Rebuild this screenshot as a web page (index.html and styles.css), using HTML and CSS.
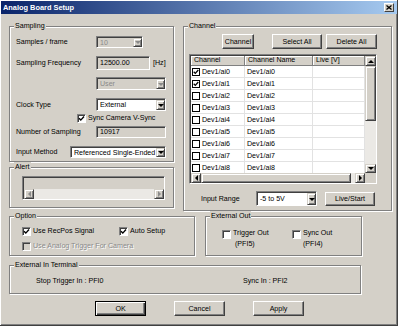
FILE: index.html
```html
<!DOCTYPE html>
<html>
<head>
	<title>Analog Board Setup</title>
	<link rel="stylesheet" href="styles.css">
</head>
<body>
	<div class="window">
		<div class="titlebar">
			<span class="title">Analog Board Setup</span>
			<span class="close"><svg width="6" height="5" viewBox="0 0 6 5"><path d="M0.5 0.5L5.5 4.5M5.5 0.5L0.5 4.5" stroke="#000" stroke-width="1.3"/></svg></span>
		</div>

		<div class="top">
			<div class="left-col">
				<fieldset class="group sampling">
					<legend>Sampling</legend>
					<div class="group-body pad-sampling">
						<div class="row mt4">
							<span class="label">Samples / frame</span>
							<div class="combo disabled w47 h12"><span class="combo-text">10</span><span class="drop"><i class="arrow-down"></i></span></div>
						</div>
						<div class="row mt8">
							<span class="label">Sampling Frequency</span>
							<div class="field readonly w54 h14">12500.00</div>
							<span class="unit">[Hz]</span>
						</div>
						<div class="row mt7">
							<div class="combo disabled w70 h13 indent"><span class="combo-text">User</span><span class="drop"><i class="arrow-down"></i></span></div>
						</div>
						<div class="row mt8">
							<span class="label">Clock Type</span>
							<div class="combo w70 h13"><span class="combo-text">External</span><span class="drop"><i class="arrow-down"></i></span></div>
						</div>
						<div class="row mt2 h10">
							<span class="check sync-check"><svg width="7" height="7" viewBox="0 0 7 7"><path d="M1 3.3L2.8 5.1L6 1.5" fill="none" stroke="#000" stroke-width="1.4"/></svg></span>
							<span class="check-label">Sync Camera V-Sync</span>
						</div>
						<div class="row mt3">
							<span class="label">Number of Sampling</span>
							<div class="field readonly w70 h12">10917</div>
						</div>
						<div class="row mt8">
							<span class="label short">Input Method</span>
							<div class="combo w96 h12"><span class="combo-text">Referenced Single-Ended</span><span class="drop"><i class="arrow-down"></i></span></div>
						</div>
					</div>
				</fieldset>

				<fieldset class="group alert">
					<legend>Alert</legend>
					<div class="group-body pad-alert">
						<div class="alert-box">
							<div class="alert-area"></div>
							<div class="hscroll">
								<span class="sb-btn sb-h"><i class="arrow-left gray"></i></span>
								<span class="track"></span>
								<span class="sb-btn sb-h"><i class="arrow-right gray"></i></span>
							</div>
						</div>
					</div>
				</fieldset>
			</div>

			<fieldset class="group channel">
				<legend>Channel</legend>
				<div class="group-body pad-channel">
					<div class="channel-buttons">
						<button class="btn btn-channel">Channel</button>
						<button class="btn btn-select">Select All</button>
						<button class="btn btn-delete">Delete All</button>
					</div>

					<div class="listview">
						<div class="lv-body">
							<div class="lv-header">
								<span class="col c1">Channel</span>
								<span class="col c2">Channel Name</span>
								<span class="col c3">Live [V]</span>
							</div>
							<div class="lv-row"><span class="cell c1"><span class="lv-check"><svg width="6" height="6" viewBox="0 0 6 6"><path d="M0.7 2.8L2.3 4.4L5.3 1" fill="none" stroke="#000" stroke-width="1.3"/></svg></span>Dev1/ai0</span><span class="cell c2">Dev1/ai0</span><span class="cell c3"></span></div>
							<div class="lv-row"><span class="cell c1"><span class="lv-check"><svg width="6" height="6" viewBox="0 0 6 6"><path d="M0.7 2.8L2.3 4.4L5.3 1" fill="none" stroke="#000" stroke-width="1.3"/></svg></span>Dev1/ai1</span><span class="cell c2">Dev1/ai1</span><span class="cell c3"></span></div>
							<div class="lv-row"><span class="cell c1"><span class="lv-check"></span>Dev1/ai2</span><span class="cell c2">Dev1/ai2</span><span class="cell c3"></span></div>
							<div class="lv-row"><span class="cell c1"><span class="lv-check"></span>Dev1/ai3</span><span class="cell c2">Dev1/ai3</span><span class="cell c3"></span></div>
							<div class="lv-row"><span class="cell c1"><span class="lv-check"></span>Dev1/ai4</span><span class="cell c2">Dev1/ai4</span><span class="cell c3"></span></div>
							<div class="lv-row"><span class="cell c1"><span class="lv-check"></span>Dev1/ai5</span><span class="cell c2">Dev1/ai5</span><span class="cell c3"></span></div>
							<div class="lv-row"><span class="cell c1"><span class="lv-check"></span>Dev1/ai6</span><span class="cell c2">Dev1/ai6</span><span class="cell c3"></span></div>
							<div class="lv-row"><span class="cell c1"><span class="lv-check"></span>Dev1/ai7</span><span class="cell c2">Dev1/ai7</span><span class="cell c3"></span></div>
							<div class="lv-row"><span class="cell c1"><span class="lv-check"></span>Dev1/ai8</span><span class="cell c2">Dev1/ai8</span><span class="cell c3"></span></div>
							<div class="lv-row"><span class="cell c1"><span class="lv-check"></span></span><span class="cell c2"></span><span class="cell c3"></span></div>
						</div>
						<div class="vscroll">
							<span class="sb-btn sb-up"><i class="arrow-up"></i></span>
							<span class="thumb v-thumb"></span>
							<span class="track"></span>
							<span class="sb-btn sb-down"><i class="arrow-down"></i></span>
						</div>
						<div class="hscroll">
							<span class="sb-btn sb-h"><i class="arrow-left"></i></span>
							<span class="thumb h-thumb"></span>
							<span class="track"></span>
							<span class="sb-btn sb-h"><i class="arrow-right"></i></span>
						</div>
						<div class="corner"></div>
					</div>

					<div class="input-row">
						<span class="range-label">Input Range</span>
						<div class="combo w61 h15"><span class="combo-text">-5 to 5V</span><span class="drop"><i class="arrow-down"></i></span></div>
						<button class="btn btn-live">Live/Start</button>
					</div>
				</div>
			</fieldset>
		</div>

		<div class="middle">
			<fieldset class="group option">
				<legend>Option</legend>
				<div class="group-body pad-option">
					<div class="row mt4 h10">
						<span class="check-item recpos">
							<span class="check"><svg width="7" height="7" viewBox="0 0 7 7"><path d="M1 3.3L2.8 5.1L6 1.5" fill="none" stroke="#000" stroke-width="1.4"/></svg></span>
							<span class="check-label">Use RecPos Signal</span>
						</span>
						<span class="check-item">
							<span class="check"><svg width="7" height="7" viewBox="0 0 7 7"><path d="M1 3.3L2.8 5.1L6 1.5" fill="none" stroke="#000" stroke-width="1.4"/></svg></span>
							<span class="check-label">Auto Setup</span>
						</span>
					</div>
					<div class="row mt5 h10">
						<span class="check-item">
							<span class="check disabled"></span>
							<span class="check-label disabled-text">Use Analog Trigger For Camera</span>
						</span>
					</div>
				</div>
			</fieldset>

			<fieldset class="group ext-out">
				<legend>External Out</legend>
				<div class="group-body pad-ext">
					<div class="out-row">
						<div class="out-item trigger">
							<span class="check out-check"></span>
							<div class="out-label"><div>Trigger Out</div><div class="pfi">(PFI5)</div></div>
						</div>
						<div class="out-item">
							<span class="check out-check"></span>
							<div class="out-label"><div>Sync Out</div><div>(PFI4)</div></div>
						</div>
					</div>
				</div>
			</fieldset>
		</div>

		<fieldset class="group terminal">
			<legend>External In Terminal</legend>
			<div class="group-body pad-terminal">
				<span class="term-item">Stop Trigger In : PFI0</span>
				<span>Sync In : PFI2</span>
			</div>
		</fieldset>

		<div class="buttons">
			<button class="btn dialog-btn default">OK</button>
			<button class="btn dialog-btn">Cancel</button>
			<button class="btn dialog-btn">Apply</button>
		</div>
	</div>
</body>
</html>
```

FILE: styles.css
```css
body {
	margin: 0;
	font-family: "Liberation Sans", Arial, sans-serif;
	font-size: 7.1px;
	color: #000;
	background: #d4d0c8;
}

.window {
	width: 398px;
	height: 326px;
	box-sizing: border-box;
	padding: 1px;
	background: #d4d0c8;
	box-shadow: inset -1px -1px #404040, inset 1px 1px #fff, inset -2px -2px #808080;
	overflow: hidden;
}

/* title bar */
.titlebar {
	height: 13px;
	display: flex;
	align-items: center;
	justify-content: space-between;
	padding: 0 3px 0 2px;
	background: linear-gradient(to right, #0a246a, #a6caf0);
}

.title {
	color: #fff;
	font-weight: bold;
	font-size: 7.4px;
}

.close {
	width: 10px;
	height: 9px;
	box-sizing: border-box;
	background: #d4d0c8;
	border: 1px solid;
	border-color: #fff #404040 #404040 #fff;
	display: flex;
	align-items: center;
	justify-content: center;
}

/* group boxes */
.group {
	margin: 0;
	padding: 0;
	min-width: 0;
	box-sizing: border-box;
	border: 1px solid #808080;
	box-shadow: inset 1px 1px #fff, 1px 1px #fff;
}

.group legend {
	margin-left: 4px;
	padding: 0 1px;
	height: 11px;
	line-height: 11px;
	background: #d4d0c8;
}

.top {
	display: flex;
	gap: 9px;
	margin: 7px 0 0 8px;
}

.left-col {
	width: 165px;
}

.sampling {
	height: 141px;
}

.alert {
	height: 46px;
}

.channel {
	width: 209px;
	height: 190px;
}

.middle {
	display: flex;
	gap: 10px;
	margin-left: 8px;
}

.option {
	width: 186px;
	height: 45px;
}

.ext-out {
	width: 157px;
	height: 45px;
}

.terminal {
	width: 352px;
	height: 34px;
	margin: 4px 0 0 8px;
}

.pad-sampling { padding-left: 6px; }
.pad-alert { padding: 3px 0 0 12px; }
.pad-channel { padding: 2px 14px 0 5px; }
.pad-option { padding-left: 12px; }
.pad-ext { padding: 6px 0 0 16px; }
.pad-terminal {
	display: flex;
	padding: 5px 0 0 26px;
	line-height: 10px;
}

/* rows */
.row {
	display: flex;
	align-items: center;
}

.mt2 { margin-top: 2px; }
.mt3 { margin-top: 3px; }
.mt4 { margin-top: 4px; }
.mt5 { margin-top: 5px; }
.mt7 { margin-top: 7px; }
.mt8 { margin-top: 8px; }

.h10 { height: 10px; }
.h12 { height: 12px; }
.h13 { height: 13px; }
.h14 { height: 14px; }
.h15 { height: 15px; }

.w47 { width: 47px; }
.w54 { width: 54px; }
.w61 { width: 61px; }
.w70 { width: 70px; }
.w96 { width: 96px; }

.label {
	width: 80px;
	flex-shrink: 0;
}

.label.short {
	width: 54px;
}

.indent {
	margin-left: 80px;
}

.unit {
	margin-left: 3px;
}

/* edit and combo boxes */
.field,
.combo {
	display: flex;
	align-items: center;
	box-sizing: border-box;
	border: 1px solid;
	border-color: #808080 #fff #fff #808080;
	box-shadow: inset 1px 1px #404040;
	background: #fff;
	white-space: nowrap;
}

.field {
	padding-left: 3px;
}

.field.readonly,
.combo.disabled {
	background: #d4d0c8;
}

.combo {
	padding: 1px 0 0 3px;
}

.combo-text {
	flex: 1;
	overflow: hidden;
}

.combo.disabled .combo-text {
	color: #8a8a8a;
}

.drop {
	width: 9px;
	align-self: stretch;
	box-sizing: border-box;
	background: #d4d0c8;
	border: 1px solid;
	border-color: #d4d0c8 #404040 #404040 #d4d0c8;
	box-shadow: inset 1px 1px #fff, inset -1px -1px #808080;
	display: flex;
	align-items: center;
	justify-content: center;
}

.combo.disabled .arrow-down {
	border-top-color: #8a8a8a;
}

/* arrows */
.arrow-down,
.arrow-up,
.arrow-left,
.arrow-right {
	width: 0;
	height: 0;
	display: block;
}

.arrow-down {
	border-left: 3px solid transparent;
	border-right: 3px solid transparent;
	border-top: 3px solid #000;
}

.arrow-up {
	border-left: 3px solid transparent;
	border-right: 3px solid transparent;
	border-bottom: 3px solid #000;
}

.arrow-left {
	border-top: 3px solid transparent;
	border-bottom: 3px solid transparent;
	border-right: 3px solid #000;
}

.arrow-right {
	border-top: 3px solid transparent;
	border-bottom: 3px solid transparent;
	border-left: 3px solid #000;
}

.arrow-left.gray { border-right-color: #8a8a8a; }
.arrow-right.gray { border-left-color: #8a8a8a; }

/* checkboxes */
.check {
	width: 9px;
	height: 9px;
	box-sizing: border-box;
	flex-shrink: 0;
	border: 1px solid;
	border-color: #808080 #fff #fff #808080;
	box-shadow: inset 1px 1px #404040;
	background: #fff;
	display: flex;
	align-items: center;
	justify-content: center;
}

.check.disabled {
	background: #d4d0c8;
}

.check-label {
	margin-left: 2px;
	white-space: nowrap;
}

.sync-check {
	margin-left: 61px;
}

.check-item {
	display: flex;
	align-items: center;
}

.check-item.recpos {
	width: 97px;
}

.disabled-text {
	color: #8a8a8a;
	text-shadow: 1px 1px #fff;
}

/* external out */
.out-row {
	display: flex;
}

.out-item {
	display: flex;
	align-items: flex-start;
}

.out-item.trigger {
	width: 70px;
}

.out-check {
	margin-top: 2px;
}

.out-label {
	margin-left: 2px;
	line-height: 11px;
}

.pfi {
	padding-left: 2px;
}

.term-item {
	width: 207px;
}

/* buttons */
.btn {
	font: inherit;
	color: #000;
	margin: 0;
	padding: 0;
	box-sizing: border-box;
	background: #d4d0c8;
	border: 1px solid;
	border-color: #fff #404040 #404040 #fff;
	box-shadow: inset -1px -1px #808080;
}

.channel-buttons {
	display: flex;
	justify-content: flex-end;
	height: 15px;
}

.btn-channel { width: 32px; }
.btn-select { width: 50px; margin-left: 18px; }
.btn-delete { width: 51px; margin-left: 4px; }

.btn-live {
	width: 50px;
	height: 14px;
	margin-left: 8px;
}

.buttons {
	display: flex;
	gap: 28px;
	margin-top: 7px;
	padding-left: 94px;
}

.dialog-btn {
	width: 51px;
	height: 15px;
}

.dialog-btn.default {
	border-color: #000;
	box-shadow: inset 1px 1px #fff, inset -1px -1px #404040, inset -2px -2px #808080;
}

/* list view */
.listview {
	margin-top: 5px;
	width: 188px;
	height: 130px;
	box-sizing: border-box;
	border: 1px solid;
	border-color: #808080 #fff #fff #808080;
	padding: 1px 0 0 1px;
	box-shadow: inset 1px 1px #404040;
	display: grid;
	grid-template-columns: 174px 11px;
	grid-template-rows: 117px 10px;
}

.lv-body {
	background: #fff;
	overflow: hidden;
}

.lv-header {
	display: flex;
	height: 10px;
}

.col {
	box-sizing: border-box;
	background: #d4d0c8;
	border-right: 1px solid #808080;
	border-bottom: 1px solid #808080;
	box-shadow: inset 1px 1px #fff;
	padding-left: 3px;
	line-height: 9px;
	white-space: nowrap;
}

.c1 { width: 54px; }
.c2 { width: 68px; }
.c3 { width: 52px; }

.lv-row {
	display: flex;
	height: 12px;
	box-sizing: border-box;
	border-bottom: 1px solid #e2e2e2;
}

.cell {
	box-sizing: border-box;
	display: flex;
	align-items: center;
	border-right: 1px solid #e2e2e2;
	padding-left: 2px;
	white-space: nowrap;
}

.cell.c1 {
	padding-left: 1px;
}

.lv-check {
	width: 8px;
	height: 8px;
	box-sizing: border-box;
	border: 1px solid #000;
	background: #fff;
	margin-right: 2px;
	display: flex;
	align-items: center;
	justify-content: center;
}

/* scroll bars */
.vscroll {
	display: flex;
	flex-direction: column;
}

.hscroll {
	display: flex;
	height: 10px;
}

.sb-btn,
.thumb {
	box-sizing: border-box;
	background: #d4d0c8;
	border: 1px solid;
	border-color: #d4d0c8 #404040 #404040 #d4d0c8;
	box-shadow: inset 1px 1px #fff, inset -1px -1px #808080;
	display: flex;
	align-items: center;
	justify-content: center;
	flex-shrink: 0;
}

.sb-up { height: 10px; }
.sb-down { height: 9px; }
.sb-h { width: 10px; }

.v-thumb { height: 55px; }
.h-thumb { width: 150px; }

.track {
	flex: 1;
	background: #ebe9e5;
}

.corner {
	background: #d4d0c8;
}

.input-row {
	display: flex;
	align-items: center;
	margin-top: 7px;
	padding-left: 12px;
}

.range-label {
	width: 55px;
}

/* alert */
.alert-box {
	width: 143px;
	height: 24px;
	box-sizing: border-box;
	border: 1px solid;
	border-color: #808080 #fff #fff #808080;
	padding: 1px 0 0 1px;
	box-shadow: inset 1px 1px #404040;
	display: flex;
	flex-direction: column;
}

.alert-area {
	flex: 1;
}
```
